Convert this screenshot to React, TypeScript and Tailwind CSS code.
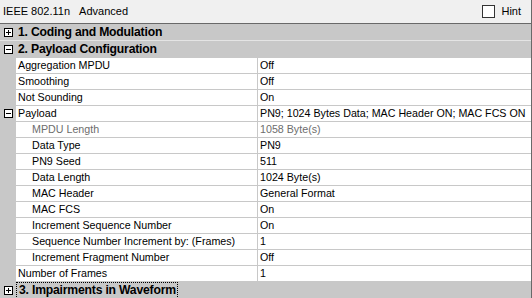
import React from "react";

const font = { fontFamily: '"Liberation Sans", Arial, sans-serif' };

function Box({ open }: { open: boolean }) {
    return (
        <svg width="9" height="9" viewBox="0 0 9 9" className="block">
            <rect x="0.5" y="0.5" width="8" height="8" fill="#fff" stroke="#000" />
            <path d="M2 4.5h5" stroke="#000" />
            {!open && <path d="M4.5 2v5" stroke="#000" />}
        </svg>
    );
}

function Category({ label, open, focus, last }: { label: string; open: boolean; focus?: boolean; last?: boolean }) {
    return (
        <div className={`flex h-[17px] bg-[#c8c8c8] ${last ? "" : "border-b border-[#e4e4e4]"}`}>
            <div className="flex w-[16px] shrink-0 items-center justify-center">
                <Box open={open} />
            </div>
            <div
                className={`flex items-center whitespace-nowrap pl-[2px] pr-[1px] text-[12.2px] font-bold leading-none tracking-[-0.2px] text-black ${focus ? "border border-dotted border-black" : ""}`}
            >
                {label}
            </div>
        </div>
    );
}

function Row({
    name,
    value,
    indent,
    expander,
    muted,
}: {
    name: string;
    value: string;
    indent?: boolean;
    expander?: boolean;
    muted?: boolean;
}) {
    const color = muted ? "text-[#6d6d6d]" : "text-black";
    return (
        <div className="flex h-[16px] border-b border-[#c8c8c8]">
            <div className="flex w-[16px] shrink-0 items-center justify-center bg-[#c8c8c8]">
                {expander && <Box open />}
            </div>
            <div
                className={`flex w-[241px] shrink-0 items-center whitespace-nowrap bg-white text-[10.7px] leading-none ${color} ${indent ? "pl-[16px]" : "pl-[2px]"}`}
            >
                {name}
            </div>
            <div className={`flex flex-1 items-center whitespace-nowrap border-l border-[#c8c8c8] bg-white pl-[2px] text-[10.7px] leading-none ${color}`}>
                {value}
            </div>
        </div>
    );
}

export default function App() {
    return (
        <div className="h-[298px] w-[532px] overflow-hidden border-r border-[#696969] bg-[#c8c8c8]" style={font}>
            {/* toolbar */}
            <div className="flex h-[24px] items-center justify-between border-b border-[#696969] bg-[#f0f0f0] pl-[3px] pr-[10px] text-[11px] text-black">
                <div className="flex items-center gap-[9px]">
                    <span>IEEE 802.11n</span>
                    <span>Advanced</span>
                </div>
                <label className="flex items-center gap-[6px]">
                    <span className="block h-[13px] w-[13px] border border-[#333] bg-white" />
                    <span>Hint</span>
                </label>
            </div>

            <Category label="1. Coding and Modulation" open={false} />
            <Category label="2. Payload Configuration" open last />
            <Row name="Aggregation MPDU" value="Off" />
            <Row name="Smoothing" value="Off" />
            <Row name="Not Sounding" value="On" />
            <Row name="Payload" value="PN9; 1024 Bytes Data; MAC Header ON; MAC FCS ON" expander />
            <Row name="MPDU Length" value="1058 Byte(s)" indent muted />
            <Row name="Data Type" value="PN9" indent />
            <Row name="PN9 Seed" value="511" indent />
            <Row name="Data Length" value="1024 Byte(s)" indent />
            <Row name="MAC Header" value="General Format" indent />
            <Row name="MAC FCS" value="On" indent />
            <Row name="Increment Sequence Number" value="On" indent />
            <Row name="Sequence Number Increment by: (Frames)" value="1" indent />
            <Row name="Increment Fragment Number" value="Off" indent />
            <Row name="Number of Frames" value="1" />
            <Category label="3. Impairments in Waveform" open={false} focus last />
        </div>
    );
}
